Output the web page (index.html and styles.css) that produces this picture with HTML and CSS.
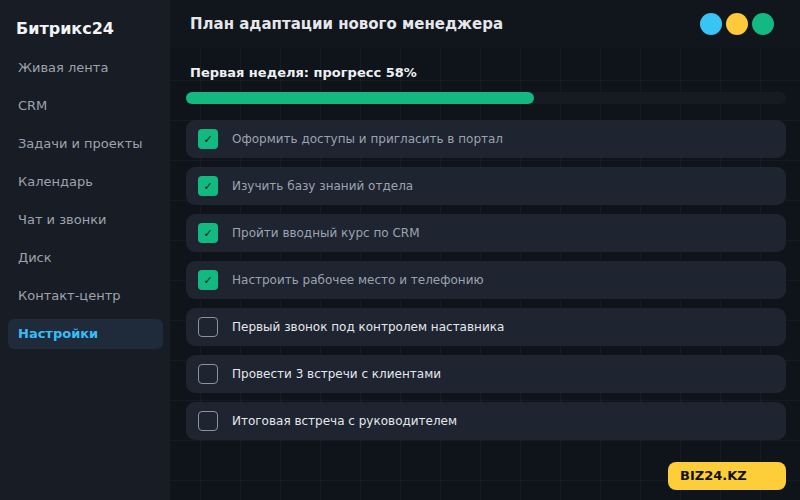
FILE: index.html
```html
<!DOCTYPE html>
<html>
<head>
    <title>План адаптации</title>
    <link rel="stylesheet" href="styles.css">
</head>
<body>

<div class="app">
    <!-- Left navigation -->
    <aside class="sidebar">
        <div class="brand">Битрикс24</div>
        <nav class="nav">
            <div class="nav-item">Живая лента</div>
            <div class="nav-item">CRM</div>
            <div class="nav-item">Задачи и проекты</div>
            <div class="nav-item">Календарь</div>
            <div class="nav-item">Чат и звонки</div>
            <div class="nav-item">Диск</div>
            <div class="nav-item">Контакт-центр</div>
            <div class="nav-item active">Настройки</div>
        </nav>
    </aside>

    <main class="main">
        <header class="topbar">
            <h1>План адаптации нового менеджера</h1>
            <div class="dots">
                <span class="dot blue"></span>
                <span class="dot yellow"></span>
                <span class="dot green"></span>
            </div>
        </header>

        <section class="content">
            <div class="progress-label">Первая неделя: прогресс 58%</div>
            <div class="progress">
                <div class="progress-fill" style="width: 58%"></div>
            </div>

            <!-- Checklist -->
            <ul class="tasks">
                <li class="task done"><span class="box">✓</span>Оформить доступы и пригласить в портал</li>
                <li class="task done"><span class="box">✓</span>Изучить базу знаний отдела</li>
                <li class="task done"><span class="box">✓</span>Пройти вводный курс по CRM</li>
                <li class="task done"><span class="box">✓</span>Настроить рабочее место и телефонию</li>
                <li class="task"><span class="box"></span>Первый звонок под контролем наставника</li>
                <li class="task"><span class="box"></span>Провести 3 встречи с клиентами</li>
                <li class="task"><span class="box"></span>Итоговая встреча с руководителем</li>
            </ul>
        </section>

        <div class="badge">BIZ24.KZ</div>
    </main>
</div>

</body>
</html>
```

FILE: styles.css
```css
* {
    box-sizing: border-box;
}
body {
    margin: 0;
    font-family: "DejaVu Sans", sans-serif;
    background-color: #0f131a;
    color: #e5e7eb;
}
.app {
    display: flex;
    width: 800px;
    height: 500px;
    overflow: hidden;
}
.sidebar {
    width: 170px;
    flex-shrink: 0;
    background-color: #181c24;
    padding: 18px 7px 0 8px;
}
.brand {
    font-size: 16px;
    font-weight: bold;
    line-height: 22px;
    color: #f3f4f6;
    padding-left: 8px;
    margin-bottom: 13px;
}
.nav-item {
    height: 30px;
    line-height: 30px;
    margin-bottom: 8px;
    padding: 0 10px;
    font-size: 13px;
    color: #9ca3af;
    border-radius: 6px;
}
.nav-item.active {
    background-color: #1f2b3b;
    color: #38bdf8;
    font-weight: bold;
}
.main {
    position: relative;
    flex: 1;
    background-color: #0f131a;
    background-image:
        linear-gradient(to right, rgba(255, 255, 255, 0.03) 1px, transparent 1px),
        linear-gradient(to bottom, rgba(255, 255, 255, 0.03) 1px, transparent 1px);
    background-size: 40px 40px;
    background-position: 30px 0;
}
.topbar {
    height: 48px;
    display: flex;
    align-items: center;
    justify-content: space-between;
    padding: 0 26px 1px 20px;
    background-color: #11151c;
}
.topbar h1 {
    margin: 0;
    font-size: 15px;
    font-weight: bold;
    color: #e5e7eb;
}
.dots {
    display: flex;
    gap: 4px;
}
.dot {
    width: 22px;
    height: 22px;
    border-radius: 50%;
}
.dot.blue { background-color: #38c5f5; }
.dot.yellow { background-color: #fcca3a; }
.dot.green { background-color: #12b981; }
.content {
    padding: 16px 14px 0 16px;
}
.progress-label {
    padding-left: 4px;
    font-size: 13px;
    font-weight: bold;
    line-height: 18px;
    color: #eef0f3;
}
.progress {
    margin-top: 10px;
    height: 12px;
    border-radius: 6px;
    background-color: #161b23;
}
.progress-fill {
    height: 100%;
    border-radius: 6px;
    background-color: #12b981;
}
.tasks {
    list-style: none;
    margin: 16px 0 0;
    padding: 0;
}
.task {
    display: flex;
    align-items: center;
    height: 38px;
    margin-bottom: 9px;
    padding: 0 12px;
    border-radius: 9px;
    background-color: #1e2430;
    font-size: 12px;
    color: #e5e7eb;
}
.task.done {
    color: #9ca3af;
}
.box {
    width: 20px;
    height: 20px;
    margin-right: 14px;
    flex-shrink: 0;
    border: 1px solid #8b929c;
    border-radius: 4px;
    display: flex;
    align-items: center;
    justify-content: center;
    font-size: 11px;
    color: #0f1a17;
}
.task.done .box {
    border: none;
    background-color: #12b981;
}
.badge {
    position: absolute;
    right: 14px;
    bottom: 10px;
    width: 118px;
    height: 28px;
    line-height: 28px;
    padding-left: 12px;
    border-radius: 8px;
    background-color: #fdcd3a;
    color: #111318;
    font-size: 13px;
    font-weight: bold;
}
```
